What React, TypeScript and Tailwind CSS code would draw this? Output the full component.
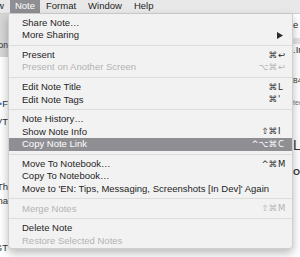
import React from 'react';

type Row =
  | { sep: true }
  | {
      sep?: false;
      label: string;
      mods?: string;
      keyName?: string;
      submenu?: boolean;
      disabled?: boolean;
      active?: boolean;
    };

const rows: Row[] = [
  { label: 'Share Note…' },
  { label: 'More Sharing', submenu: true },
  { sep: true },
  { label: 'Present', mods: '⌘', keyName: '↩' },
  { label: 'Present on Another Screen', mods: '⌥⌘', keyName: '↩', disabled: true },
  { sep: true },
  { label: 'Edit Note Title', mods: '⌘', keyName: 'L' },
  { label: 'Edit Note Tags', mods: '⌘', keyName: "'" },
  { sep: true },
  { label: 'Note History…' },
  { label: 'Show Note Info', mods: '⇧⌘', keyName: 'I' },
  { label: 'Copy Note Link', mods: '^⌥⌘', keyName: 'C', active: true },
  { sep: true },
  { label: 'Move To Notebook…', mods: '^⌘', keyName: 'M' },
  { label: 'Copy To Notebook…' },
  { label: "Move to 'EN: Tips, Messaging, Screenshots [In Dev]' Again" },
  { sep: true },
  { label: 'Merge Notes', mods: '⇧⌘', keyName: 'M', disabled: true },
  { sep: true },
  { label: 'Delete Note' },
  { label: 'Restore Selected Notes', disabled: true },
];

function MenuItem({ row }: { row: Exclude<Row, { sep: true }> }) {
  const tone = row.active
    ? 'bg-[#8e8e93] text-white'
    : row.disabled
      ? 'text-[#b3b3b3]'
      : 'text-[#1e1e1e]';
  return (
    <div className={`flex h-[12.5px] items-center justify-between pl-[13px] pr-[7px] ${tone}`}>
      <span className="whitespace-nowrap">{row.label}</span>
      {row.submenu && (
        <svg width="6" height="7" viewBox="0 0 6 7" className="mr-[2px]">
          <path d="M0 0 L6 3.5 L0 7 Z" fill="#2a2a2a" />
        </svg>
      )}
      {row.keyName && (
        <span className="flex items-center font-['DejaVu_Sans',sans-serif] text-[8.5px]">
          <span className="text-right">{row.mods}</span>
          <span className="w-[8px] pl-[1px] text-left">{row.keyName}</span>
        </span>
      )}
    </div>
  );
}

export default function App() {
  return (
    <div className="relative flex h-[257px] w-[300px] flex-col overflow-hidden bg-white font-['Liberation_Sans',Arial,sans-serif] text-[9.5px]">
      {/* Menu bar */}
      <div className="flex h-[14px] shrink-0 items-center border-b border-[#d0d0d0] bg-[#e8e8e8] text-[#1e1e1e]">
        <span className="-ml-[3px] w-[13px]">w</span>
        <span className="flex h-full w-[30px] items-center justify-center bg-[#8e8e93] text-white">Note</span>
        <span className="ml-[6px]">Format</span>
        <span className="ml-[12px]">Window</span>
        <span className="ml-[12px]">Help</span>
      </div>

      {/* App window behind the menu */}
      <div className="flex flex-1">
        <div className="flex w-[8px] flex-col text-[#333]">
          <div className="flex h-[43px] items-end justify-end overflow-hidden whitespace-nowrap bg-[#d6d6d6] pb-[5px] text-[8.5px]">
            Mon
          </div>
          <div className="mt-[40px] flex justify-end overflow-hidden whitespace-nowrap">
            <span className="text-[#3b82f6]">•</span> F
          </div>
          <div className="mt-[4px] flex justify-end overflow-hidden whitespace-nowrap">VT</div>
          <div className="mt-[50px] flex justify-end overflow-hidden whitespace-nowrap">'Th</div>
          <div className="flex justify-end overflow-hidden whitespace-nowrap">ona</div>
          <div className="mt-[33px] flex justify-end overflow-hidden whitespace-nowrap">GT</div>
          <div className="flex justify-end overflow-hidden whitespace-nowrap">ch</div>
        </div>

        <div className="flex flex-1 flex-col">
          <div className="mt-auto flex h-[9px] items-end gap-[6px] pl-[195px]">
            <span className="h-[5px] w-px bg-[#444]" />
            <span className="h-[3px] w-[10px] bg-[#6fb33f]" />
            <span className="ml-[18px] h-[3px] w-[10px] bg-[#8fd6d6]" />
            <span className="ml-[13px] h-[9px] w-px bg-[#e2e2e2]" />
          </div>
        </div>

        <div className="flex w-[7px] flex-col overflow-hidden whitespace-nowrap text-[#333]">
          <div className="mt-[4px]">e F</div>
          <div className="mt-[6px] h-[6px] bg-[#e4e4e4]" />
          <div className="mt-[-1px]">.In</div>
          <div className="mt-[18px] text-[7px]">B4</div>
          <div className="mt-[12px] text-[7px] text-[#777]">tec</div>
          <div className="mt-[26px] text-[14px]">L</div>
          <div className="mt-[10px] text-[9px] font-bold">O</div>
        </div>
      </div>

      {/* Dropdown menu */}
      <div className="absolute left-[8px] top-[14px] w-[285px] rounded-b-[4px] border border-t-0 border-[#cfcfcf] bg-[#f2f2f2] pt-[2.5px] pb-[1px] shadow-[0_4px_10px_rgba(0,0,0,0.28)]">
        {rows.map((row, i) =>
          row.sep ? (
            <div key={i} className="flex h-[7.2px] items-center">
              <div className="h-px w-full bg-[#dcdcdc]" />
            </div>
          ) : (
            <MenuItem key={i} row={row} />
          )
        )}
      </div>
    </div>
  );
}
